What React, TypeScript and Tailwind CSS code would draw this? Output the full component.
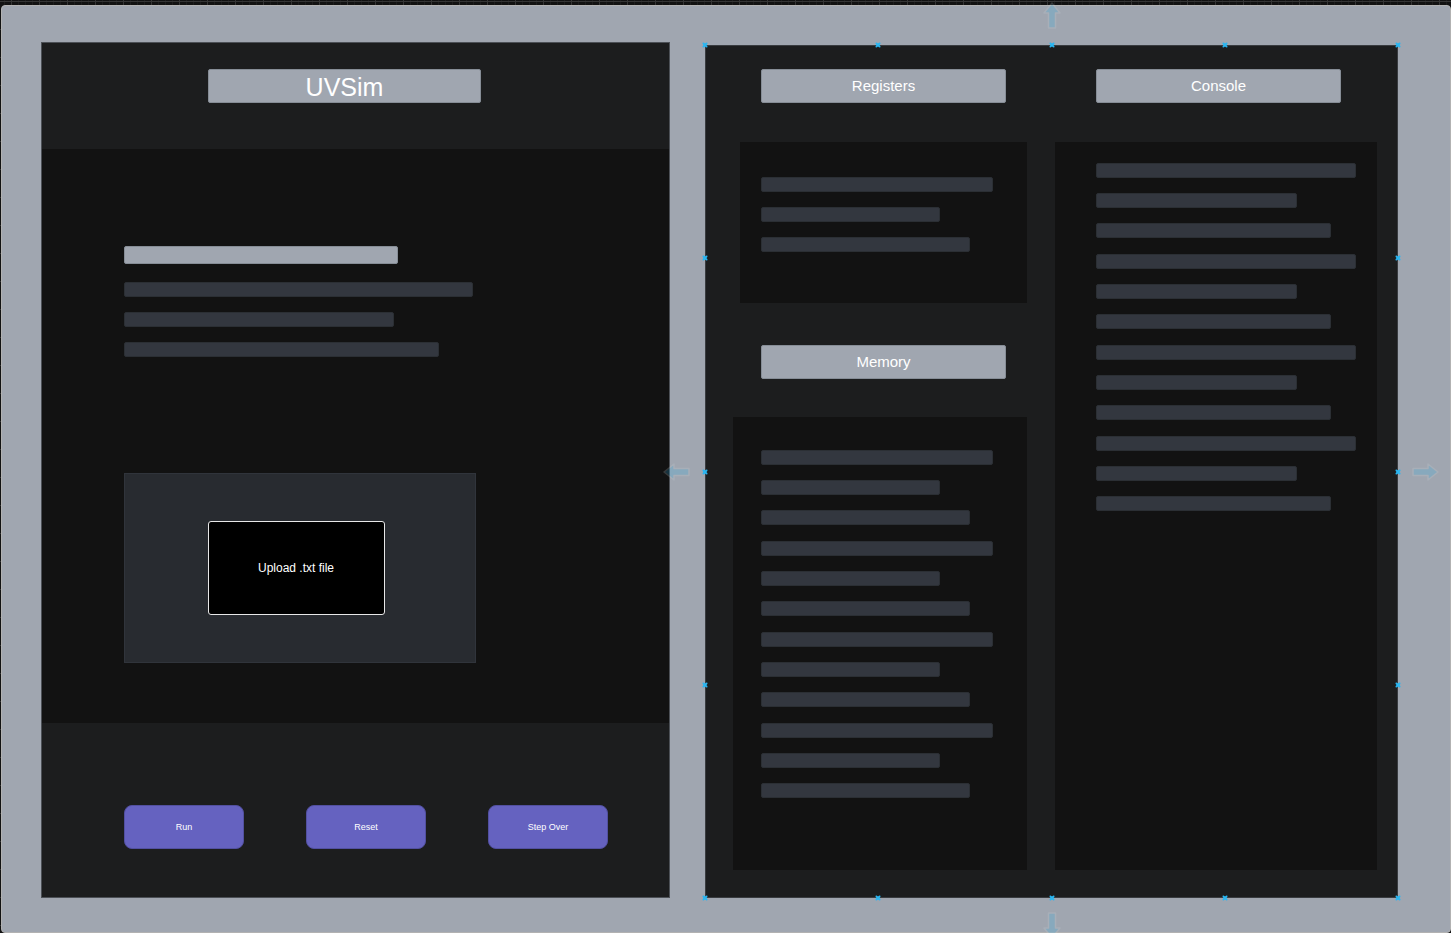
const HANDLES = [
  'left-0 top-0',
  'left-1/4 top-0',
  'left-1/2 top-0',
  'left-3/4 top-0',
  'left-full top-0',
  'left-0 top-1/4',
  'left-full top-1/4',
  'left-0 top-1/2',
  'left-full top-1/2',
  'left-0 top-3/4',
  'left-full top-3/4',
  'left-0 top-full',
  'left-1/4 top-full',
  'left-1/2 top-full',
  'left-3/4 top-full',
  'left-full top-full',
];

const ARROWS = [
  'left-1/2 bottom-full mb-[15px] -translate-x-1/2',
  'left-1/2 top-full mt-[13px] -translate-x-1/2 rotate-180',
  'right-full top-1/2 mr-[14px] -translate-y-1/2 -rotate-90',
  'left-full top-1/2 ml-[13px] -translate-y-1/2 rotate-90',
];

const WIDE = ['w-[349px]', 'w-[270px]', 'w-[315px]'];
const REGISTER = ['w-[232px]', 'w-[179px]', 'w-[209px]'];
const CONSOLE = ['w-[260px]', 'w-[201px]', 'w-[235px]'];

function Lines({ widths, groups = 1 }: { widths: string[]; groups?: number }) {
  return (
    <div className="flex flex-col gap-4" aria-hidden="true">
      {Array.from({ length: groups }, (_, g) => (
        <div key={g} className="flex flex-col gap-[15px]">
          {widths.map((w) => (
            <div
              key={w}
              className={`h-[15px] max-w-full rounded-xs border border-[#2b2f34] bg-[#33373f] ${w}`}
            />
          ))}
        </div>
      ))}
    </div>
  );
}

const titleClass =
  'flex h-[34px] items-center justify-center rounded-xs border border-[#868d96] bg-[#a0a6b0] text-white';

function SectionTitle({ children }: { children: string }) {
  return <h2 className={`${titleClass} text-[15px] leading-5`}>{children}</h2>;
}

function DirectionArrow({ place }: { place: string }) {
  return (
    <svg className={`absolute size-7 opacity-20 ${place}`} viewBox="0 0 28 28" aria-hidden="true">
      <path
        d="M14 1 L22 11 L17.5 11 L17.5 26 L10.5 26 L10.5 11 L6 11 Z"
        fill="#29b6f2"
        stroke="#c8d4d8"
        strokeWidth="1.5"
        strokeLinejoin="round"
      />
    </svg>
  );
}

function Handle({ place }: { place: string }) {
  return (
    <svg
      className={`absolute size-[5px] -translate-x-1/2 -translate-y-1/2 ${place}`}
      viewBox="0 0 5 5"
      aria-hidden="true"
    >
      <path d="M0 0 L5 5 M5 0 L0 5" stroke="#29b6f2" strokeWidth="2" />
    </svg>
  );
}

function Simulator() {
  return (
    <section className="flex flex-col border border-[#4c5056] bg-[#1c1d1e]">
      <header className="pt-[26px] pr-[188px] pb-[46px] pl-[166px]">
        <h1 className={`${titleClass} pt-0.5 text-[25px] leading-8`}>UVSim</h1>
      </header>
      <div className="flex flex-1 flex-col bg-[#121212] pt-[97px] pb-[60px] pl-[82px]">
        <div className="mb-[18px] h-[18px] w-[274px] max-w-full rounded-xs border border-[#868d96] bg-[#a0a6b0]" />
        <Lines widths={WIDE} />
        <div className="mt-auto flex h-[190px] w-[352px] max-w-full items-center justify-center border border-[#30343b] bg-[#282b30] pr-2">
          <button
            type="button"
            className="h-[94px] w-[177px] rounded-[3px] border border-[#e8e8e8] bg-black text-xs text-white"
          >
            Upload .txt file
          </button>
        </div>
      </div>
      <footer className="flex gap-[62px] pt-[82px] pr-5 pb-12 pl-[82px]">
        {['Run', 'Reset', 'Step Over'].map((label) => (
          <button
            key={label}
            type="button"
            className="h-11 w-[120px] rounded-lg border border-[#5250a0] bg-[#6562c0] text-[9px] leading-3 text-white"
          >
            {label}
          </button>
        ))}
      </footer>
    </section>
  );
}

function Inspector() {
  return (
    <section className="relative mt-[3px] flex">
      <div className="grid flex-1 grid-cols-[minmax(0,294fr)_minmax(0,322fr)] gap-7 border border-[#393c40] bg-[#1c1d1e] pt-[23px] pr-5 pb-[27px] pl-[27px]">
        <div className="flex flex-col">
          <div className="mr-[21px] mb-[39px] ml-7">
            <SectionTitle>Registers</SectionTitle>
          </div>
          <div className="mb-[42px] ml-[7px] bg-[#121212] pt-[35px] pb-[51px] pl-[21px]">
            <Lines widths={REGISTER} />
          </div>
          <div className="mr-[21px] mb-[38px] ml-7">
            <SectionTitle>Memory</SectionTitle>
          </div>
          <div className="flex-1 bg-[#121212] pt-[33px] pl-7">
            <Lines widths={REGISTER} groups={4} />
          </div>
        </div>
        <div className="flex flex-col">
          <div className="mr-9 mb-[39px] ml-[41px]">
            <SectionTitle>Console</SectionTitle>
          </div>
          <div className="flex-1 bg-[#121212] pt-[21px] pl-[41px]">
            <Lines widths={CONSOLE} groups={4} />
          </div>
        </div>
      </div>
      {HANDLES.map((place) => (
        <Handle key={place} place={place} />
      ))}
      {ARROWS.map((place) => (
        <DirectionArrow key={place} place={place} />
      ))}
    </section>
  );
}

export default function App() {
  return (
    <div className="flex min-h-screen flex-col overflow-hidden bg-[#121212] bg-[linear-gradient(#353535_1px,transparent_1px),linear-gradient(90deg,#353535_1px,transparent_1px),linear-gradient(90deg,#1d1d1d_1px,transparent_1px)] bg-[size:28px_28px,28px_28px,7px_7px] bg-[position:11px_1px,11px_1px,4px_1px] pt-[5px] pl-px font-['Liberation_Sans',Arial,sans-serif]">
      <main className="grid flex-1 grid-cols-[minmax(0,629fr)_minmax(0,693fr)] gap-[35px] rounded-[4px] border border-[#b2b2b2] bg-[#a0a6b0] pt-9 pr-[52px] pb-[34px] pl-[39px]">
        <Simulator />
        <Inspector />
      </main>
    </div>
  );
}
